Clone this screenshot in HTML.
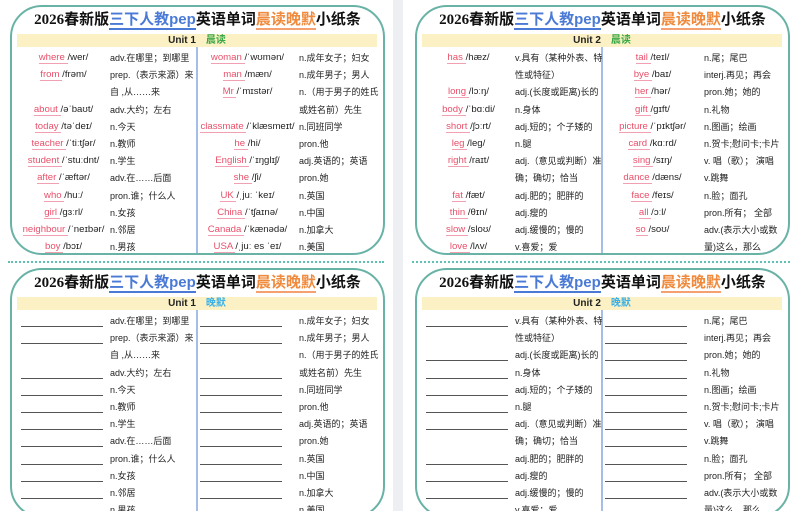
<!DOCTYPE html>
<html><head><meta charset="utf-8"><style>
*{margin:0;padding:0;box-sizing:border-box}
html,body{width:800px;height:511px;overflow:hidden;background:#fff;position:relative;font-family:"Liberation Sans","Noto Sans CJK SC",sans-serif}
.strip{position:absolute;left:393px;top:0;width:10px;height:511px;background:#eeeff3}
.dots{position:absolute;top:261px;height:0;border-top:2px dotted #5fc0b4}
.pg{position:absolute;width:395px;height:263px}
.bd{position:absolute;left:10px;top:5px;width:375px;height:250px;border:2px solid #68b2a6;border-radius:32px}
.tt{position:absolute;left:10px;width:375px;top:10px;text-align:center;font-size:15px;line-height:20px;font-weight:bold;color:#111;white-space:nowrap;font-family:"Liberation Serif","Noto Sans CJK SC",serif}
.tt .cj{font-family:"Liberation Sans","Noto Sans CJK SC",sans-serif}
.bl{color:#4a7ad6;border-bottom:2px solid #4a7ad6}
.or{color:#f08a3c;border-bottom:2px solid #f4a070}
.bar{position:absolute;left:17px;top:34px;width:360px;height:13px;background:#fbf1c4;text-align:center;font-size:10px;font-weight:bold;line-height:13px;color:#222}
.g{color:#3aa845;margin-left:10px}.b{color:#3ab0e8;margin-left:10px}
.dv{position:absolute;left:196px;top:47px;width:1.5px;height:206px;background:#a6bde8}
.col{position:absolute;top:49px}
.cl{left:17px;width:179px}.cr{left:196px;width:187px}
.r{height:17.2px;display:flex;align-items:center;font-size:9px;color:#222;white-space:nowrap;position:relative}
.w{flex-shrink:0;display:block;position:relative;height:17px;line-height:17px;font-size:9.6px}
.cl .w{width:93px;text-align:center}.cr .w{width:103px;text-align:center}
.w i{font-style:normal;color:#e8506a;border-bottom:1px solid #f0a0b0}
.ln{position:absolute;left:4px;top:14px;width:82px;border-top:1px solid #555}
</style></head><body>
<div class="strip"></div>
<div class="dots" style="left:8px;width:376px"></div>
<div class="dots" style="left:412px;width:378px"></div>

<!-- TOP LEFT -->
<div class="pg" style="left:0;top:0">
<div class="bd"></div>
<div class="tt">2026<span class="cj">春新版</span><span class="bl cj">三下人教pep</span><span class="cj">英语单词</span><span class="or cj">晨读晚默</span><span class="cj">小纸条</span></div>
<div class="bar">Unit 1<span class="g">晨读</span></div>
<div class="dv"></div>
<div class="col cl">
<div class="r"><span class="w"><i>where </i>/wer/</span>adv.在哪里；到哪里</div>
<div class="r"><span class="w"><i>from </i>/frəm/</span>prep.（表示来源）来</div>
<div class="r"><span class="w"></span>自 ,从……来</div>
<div class="r"><span class="w"><i>about </i>/əˈbaʊt/</span>adv.大约；左右</div>
<div class="r"><span class="w"><i>today </i>/təˈdeɪ/</span>n.今天</div>
<div class="r"><span class="w"><i>teacher </i>/ˈtiːtʃər/</span>n.教师</div>
<div class="r"><span class="w"><i>student </i>/ˈstuːdnt/</span>n.学生</div>
<div class="r"><span class="w"><i>after </i>/ˈæftər/</span>adv.在……后面</div>
<div class="r"><span class="w"><i>who </i>/huː/</span>pron.谁；什么人</div>
<div class="r"><span class="w"><i>girl </i>/ɡɜːrl/</span>n.女孩</div>
<div class="r"><span class="w"><i>neighbour </i>/ˈneɪbər/</span>n.邻居</div>
<div class="r"><span class="w"><i>boy </i>/bɔɪ/</span>n.男孩</div>
</div>
<div class="col cr">
<div class="r"><span class="w"><i>woman </i>/ˈwʊmən/</span>n.成年女子；妇女</div>
<div class="r"><span class="w"><i>man </i>/mæn/</span>n.成年男子；男人</div>
<div class="r"><span class="w"><i>Mr </i>/ˈmɪstər/</span>n.（用于男子的姓氏</div>
<div class="r"><span class="w"></span>或姓名前）先生</div>
<div class="r"><span class="w"><i>classmate </i>/ˈklæsmeɪt/</span>n.同班同学</div>
<div class="r"><span class="w"><i>he </i>/hi/</span>pron.他</div>
<div class="r"><span class="w"><i>English </i>/ˈɪŋɡlɪʃ/</span>adj.英语的；英语</div>
<div class="r"><span class="w"><i>she </i>/ʃi/</span>pron.她</div>
<div class="r"><span class="w"><i>UK </i>/ˌjuː ˈkeɪ/</span>n.英国</div>
<div class="r"><span class="w"><i>China </i>/ˈtʃaɪnə/</span>n.中国</div>
<div class="r"><span class="w"><i>Canada </i>/ˈkænədə/</span>n.加拿大</div>
<div class="r"><span class="w"><i>USA </i>/ˌjuː es ˈeɪ/</span>n.美国</div>
</div>
</div>

<!-- TOP RIGHT -->
<div class="pg" style="left:405px;top:0">
<div class="bd"></div>
<div class="tt">2026<span class="cj">春新版</span><span class="bl cj">三下人教pep</span><span class="cj">英语单词</span><span class="or cj">晨读晚默</span><span class="cj">小纸条</span></div>
<div class="bar">Unit 2<span class="g">晨读</span></div>
<div class="dv"></div>
<div class="col cl">
<div class="r"><span class="w"><i>has </i>/hæz/</span>v.具有（某种外表、特</div>
<div class="r"><span class="w"></span>性或特征）</div>
<div class="r"><span class="w"><i>long </i>/lɔːŋ/</span>adj.(长度或距离)长的</div>
<div class="r"><span class="w"><i>body </i>/ˈbɑːdi/</span>n.身体</div>
<div class="r"><span class="w"><i>short </i>/ʃɔːrt/</span>adj.短的；个子矮的</div>
<div class="r"><span class="w"><i>leg </i>/leɡ/</span>n.腿</div>
<div class="r"><span class="w"><i>right </i>/raɪt/</span>adj.（意见或判断）准</div>
<div class="r"><span class="w"></span>确；确切；恰当</div>
<div class="r"><span class="w"><i>fat </i>/fæt/</span>adj.肥的；肥胖的</div>
<div class="r"><span class="w"><i>thin </i>/θɪn/</span>adj.瘦的</div>
<div class="r"><span class="w"><i>slow </i>/sloʊ/</span>adj.缓慢的；慢的</div>
<div class="r"><span class="w"><i>love </i>/lʌv/</span>v.喜爱；爱</div>
</div>
<div class="col cr">
<div class="r"><span class="w"><i>tail </i>/teɪl/</span>n.尾；尾巴</div>
<div class="r"><span class="w"><i>bye </i>/baɪ/</span>interj.再见；再会</div>
<div class="r"><span class="w"><i>her </i>/hər/</span>pron.她；她的</div>
<div class="r"><span class="w"><i>gift </i>/ɡɪft/</span>n.礼物</div>
<div class="r"><span class="w"><i>picture </i>/ˈpɪktʃər/</span>n.图画；绘画</div>
<div class="r"><span class="w"><i>card </i>/kɑːrd/</span>n.贺卡;慰问卡;卡片</div>
<div class="r"><span class="w"><i>sing </i>/sɪŋ/</span>v. 唱（歌）； 演唱</div>
<div class="r"><span class="w"><i>dance </i>/dæns/</span>v.跳舞</div>
<div class="r"><span class="w"><i>face </i>/feɪs/</span>n.脸；面孔</div>
<div class="r"><span class="w"><i>all </i>/ɔːl/</span>pron.所有； 全部</div>
<div class="r"><span class="w"><i>so </i>/soʊ/</span>adv.(表示大小或数</div>
<div class="r"><span class="w"></span>量)这么，那么</div>
</div>
</div>

<!-- BOTTOM LEFT -->
<div class="pg" style="left:0;top:263px">
<div class="bd"></div>
<div class="tt">2026<span class="cj">春新版</span><span class="bl cj">三下人教pep</span><span class="cj">英语单词</span><span class="or cj">晨读晚默</span><span class="cj">小纸条</span></div>
<div class="bar">Unit 1<span class="b">晚默</span></div>
<div class="dv"></div>
<div class="col cl">
<div class="r"><span class="w"><b class="ln"></b></span>adv.在哪里；到哪里</div>
<div class="r"><span class="w"><b class="ln"></b></span>prep.（表示来源）来</div>
<div class="r"><span class="w"></span>自 ,从……来</div>
<div class="r"><span class="w"><b class="ln"></b></span>adv.大约；左右</div>
<div class="r"><span class="w"><b class="ln"></b></span>n.今天</div>
<div class="r"><span class="w"><b class="ln"></b></span>n.教师</div>
<div class="r"><span class="w"><b class="ln"></b></span>n.学生</div>
<div class="r"><span class="w"><b class="ln"></b></span>adv.在……后面</div>
<div class="r"><span class="w"><b class="ln"></b></span>pron.谁；什么人</div>
<div class="r"><span class="w"><b class="ln"></b></span>n.女孩</div>
<div class="r"><span class="w"><b class="ln"></b></span>n.邻居</div>
<div class="r"><span class="w"><b class="ln"></b></span>n.男孩</div>
</div>
<div class="col cr">
<div class="r"><span class="w"><b class="ln"></b></span>n.成年女子；妇女</div>
<div class="r"><span class="w"><b class="ln"></b></span>n.成年男子；男人</div>
<div class="r"><span class="w"></span>n.（用于男子的姓氏</div>
<div class="r"><span class="w"><b class="ln"></b></span>或姓名前）先生</div>
<div class="r"><span class="w"><b class="ln"></b></span>n.同班同学</div>
<div class="r"><span class="w"><b class="ln"></b></span>pron.他</div>
<div class="r"><span class="w"><b class="ln"></b></span>adj.英语的；英语</div>
<div class="r"><span class="w"><b class="ln"></b></span>pron.她</div>
<div class="r"><span class="w"><b class="ln"></b></span>n.英国</div>
<div class="r"><span class="w"><b class="ln"></b></span>n.中国</div>
<div class="r"><span class="w"><b class="ln"></b></span>n.加拿大</div>
<div class="r"><span class="w"><b class="ln"></b></span>n.美国</div>
</div>
</div>

<!-- BOTTOM RIGHT -->
<div class="pg" style="left:405px;top:263px">
<div class="bd"></div>
<div class="tt">2026<span class="cj">春新版</span><span class="bl cj">三下人教pep</span><span class="cj">英语单词</span><span class="or cj">晨读晚默</span><span class="cj">小纸条</span></div>
<div class="bar">Unit 2<span class="b">晚默</span></div>
<div class="dv"></div>
<div class="col cl">
<div class="r"><span class="w"><b class="ln"></b></span>v.具有（某种外表、特</div>
<div class="r"><span class="w"></span>性或特征）</div>
<div class="r"><span class="w"><b class="ln"></b></span>adj.(长度或距离)长的</div>
<div class="r"><span class="w"><b class="ln"></b></span>n.身体</div>
<div class="r"><span class="w"><b class="ln"></b></span>adj.短的；个子矮的</div>
<div class="r"><span class="w"><b class="ln"></b></span>n.腿</div>
<div class="r"><span class="w"><b class="ln"></b></span>adj.（意见或判断）准</div>
<div class="r"><span class="w"></span>确；确切；恰当</div>
<div class="r"><span class="w"><b class="ln"></b></span>adj.肥的；肥胖的</div>
<div class="r"><span class="w"><b class="ln"></b></span>adj.瘦的</div>
<div class="r"><span class="w"><b class="ln"></b></span>adj.缓慢的；慢的</div>
<div class="r"><span class="w"><b class="ln"></b></span>v.喜爱；爱</div>
</div>
<div class="col cr">
<div class="r"><span class="w"><b class="ln"></b></span>n.尾；尾巴</div>
<div class="r"><span class="w"><b class="ln"></b></span>interj.再见；再会</div>
<div class="r"><span class="w"><b class="ln"></b></span>pron.她；她的</div>
<div class="r"><span class="w"><b class="ln"></b></span>n.礼物</div>
<div class="r"><span class="w"><b class="ln"></b></span>n.图画；绘画</div>
<div class="r"><span class="w"><b class="ln"></b></span>n.贺卡;慰问卡;卡片</div>
<div class="r"><span class="w"><b class="ln"></b></span>v. 唱（歌）； 演唱</div>
<div class="r"><span class="w"><b class="ln"></b></span>v.跳舞</div>
<div class="r"><span class="w"><b class="ln"></b></span>n.脸；面孔</div>
<div class="r"><span class="w"><b class="ln"></b></span>pron.所有； 全部</div>
<div class="r"><span class="w"><b class="ln"></b></span>adv.(表示大小或数</div>
<div class="r"><span class="w"></span>量)这么，那么</div>
</div>
</div>
</body></html>
